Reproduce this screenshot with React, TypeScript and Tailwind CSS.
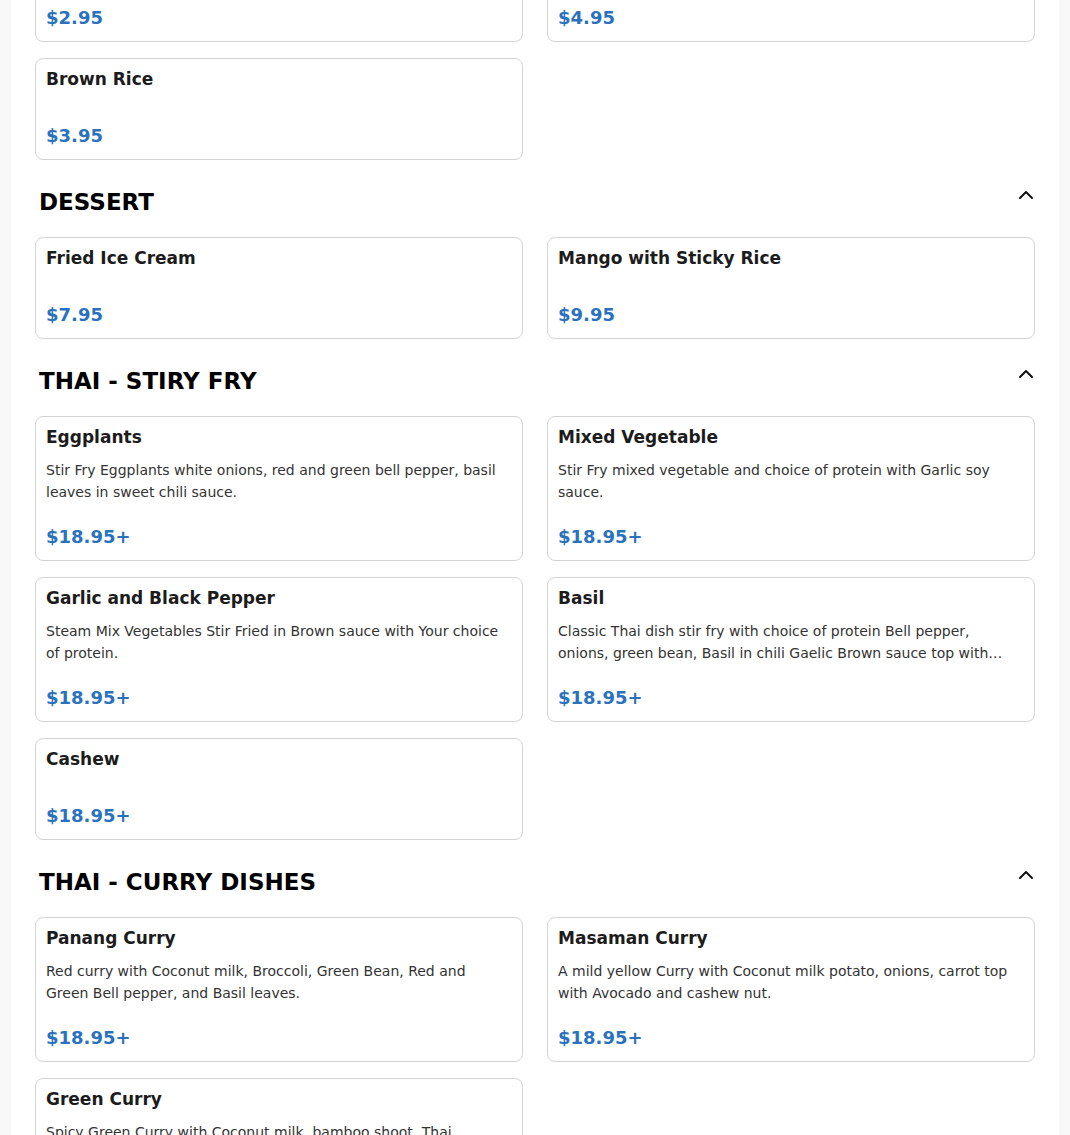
import React from "react";
import type { FC } from "react";
import { ChevronUp } from "lucide-react";

type Item = {
    name: string;
    desc?: string;
    price: string;
};

type Section = {
    title: string;
    items: Item[];
};

const sections: Section[] = [
    {
        title: "DESSERT",
        items: [
            { name: "Fried Ice Cream", price: "$7.95" },
            { name: "Mango with Sticky Rice", price: "$9.95" },
        ],
    },
    {
        title: "THAI - STIRY FRY",
        items: [
            {
                name: "Eggplants",
                desc: "Stir Fry Eggplants white onions, red and green bell pepper, basil leaves in sweet chili sauce.",
                price: "$18.95+",
            },
            {
                name: "Mixed Vegetable",
                desc: "Stir Fry mixed vegetable and choice of protein with Garlic soy sauce.",
                price: "$18.95+",
            },
            {
                name: "Garlic and Black Pepper",
                desc: "Steam Mix Vegetables Stir Fried in Brown sauce with Your choice of protein.",
                price: "$18.95+",
            },
            {
                name: "Basil",
                desc: "Classic Thai dish stir fry with choice of protein Bell pepper, onions, green bean, Basil in chili Gaelic Brown sauce top with crispy basil.",
                price: "$18.95+",
            },
            { name: "Cashew", price: "$18.95+" },
        ],
    },
    {
        title: "THAI - CURRY DISHES",
        items: [
            {
                name: "Panang Curry",
                desc: "Red curry with Coconut milk, Broccoli, Green Bean, Red and Green Bell pepper, and Basil leaves.",
                price: "$18.95+",
            },
            {
                name: "Masaman Curry",
                desc: "A mild yellow Curry with Coconut milk potato, onions, carrot top with Avocado and cashew nut.",
                price: "$18.95+",
            },
            {
                name: "Green Curry",
                desc: "Spicy Green Curry with Coconut milk, bamboo shoot, Thai eggplant, bell pepper and basil leaves.",
                price: "$18.95+",
            },
        ],
    },
];

const MenuCard: FC<{ item: Item }> = ({ item }) => {
    return (
        <div className="flex flex-col border border-[#d4d4d4] rounded-lg bg-white px-2.5 pt-2.5 pb-[9px]">
            <h3 className="text-[17px] leading-5 font-bold text-[#1c1c1c]">{item.name}</h3>
            <p className="mt-[13px] text-sm leading-[21.5px] text-[#333] line-clamp-2">{item.desc}</p>
            <p className="mt-5 text-[18px] leading-7 font-bold text-[#2a72bd]">{item.price}</p>
        </div>
    );
};

const MenuSection: FC<{ section: Section }> = ({ section }) => {
    return (
        <div>
            <div className="flex items-start justify-between mt-[26px] px-1 h-8">
                <h2 className="text-[23px] leading-8 font-bold text-black">{section.title}</h2>
                <ChevronUp className="w-6 h-6 -mt-[3px] -mr-[7px] text-[#111]" strokeWidth={2} />
            </div>
            <div className="grid grid-cols-2 gap-x-6 gap-y-4 mt-[19px]">
                {section.items.map((item) => (
                    <MenuCard key={item.name} item={item} />
                ))}
            </div>
        </div>
    );
};

const App: FC = () => {
    return (
        <div
            className="h-screen overflow-hidden bg-[#f8f8f8] px-[11px]"
            style={{ fontFamily: '"DejaVu Sans", Verdana, sans-serif' }}
        >
            <div className="bg-white min-h-full px-6 pb-10">
                <div className="-mt-[60px]">
                    <div className="grid grid-cols-2 gap-x-6 gap-y-4">
                        <MenuCard item={{ name: "Steamed Rice", price: "$2.95" }} />
                        <MenuCard item={{ name: "Sticky Rice", price: "$4.95" }} />
                        <MenuCard item={{ name: "Brown Rice", price: "$3.95" }} />
                    </div>
                    {sections.map((s) => (
                        <MenuSection key={s.title} section={s} />
                    ))}
                </div>
            </div>
        </div>
    );
};

export default App;
